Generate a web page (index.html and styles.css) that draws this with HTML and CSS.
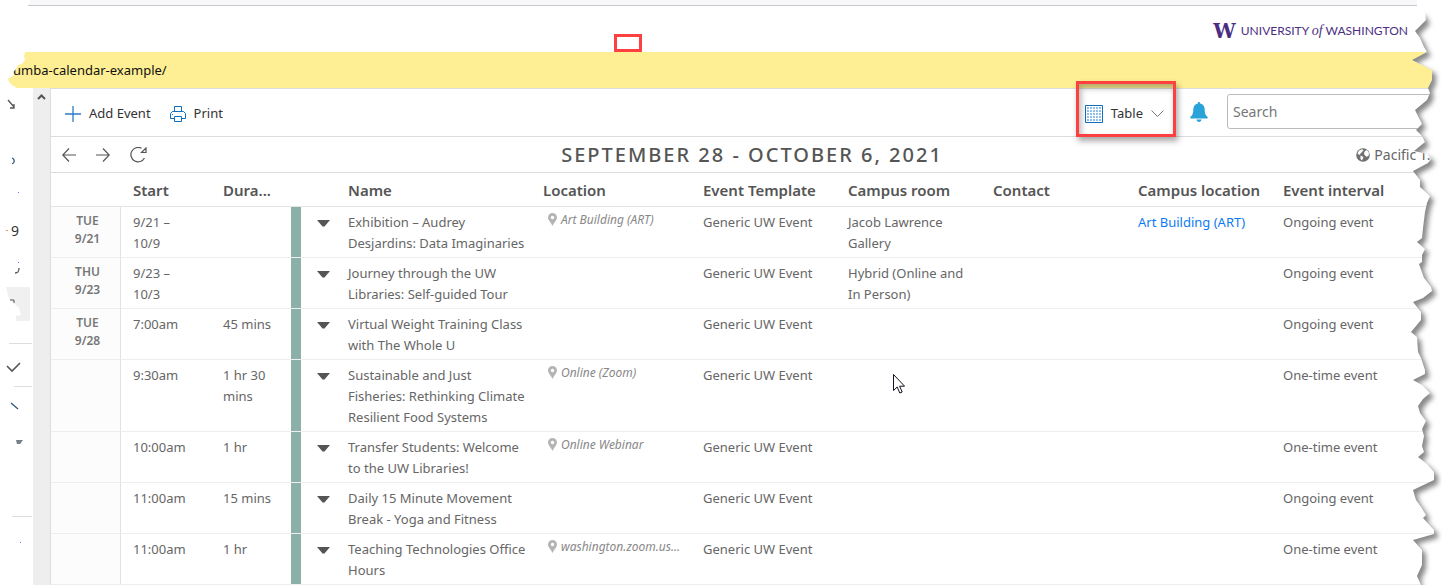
FILE: index.html
```html
<!DOCTYPE html>
<html lang="en">
<head>
<meta charset="utf-8">
<title>Calendar - Table view</title>
<link rel="stylesheet" href="styles.css">
</head>
<body>
<div class="page">
  <div class="top-strip"></div>
  <header class="brand-bar">
    <span class="marker"></span>
    <a class="brand" href="#"><span class="brand-w">W</span><span class="brand-name">UNIVERSITY <i>of</i> WASHINGTON</span></a>
  </header>
  <div class="address">umba-calendar-example/</div>
  <div class="workspace">
    <aside class="side">
      <svg width="33" height="496" viewBox="0 88 33 496" aria-hidden="true">
        <g fill="none" stroke="#555" stroke-width="1.3">
          <path d="M8 100l6 7M10 108h4v-4"/>
          <path d="M12 158c3 1 3 5 0 6" stroke="#357"/>
          <path d="M19 268c0 4-1 5-4 5"/>
          <path d="M7 366l5 5 8-8" stroke-width="1.6"/>
          <path d="M11 403l7 6" stroke="#357"/>
        </g>
        <text class="side-num" x="11" y="236">9</text>
        <path d="M6 287h24v34H16v-5l5-1-2-7-10-9z" fill="#f0f0f0"/>
        <path d="M10 300h4v3" fill="none" stroke="#555"/>
        <path d="M9 343.500h23M14 386.500h18M12 516.500h20" stroke="#ddd"/>
        <path d="M16 440h7l-3 4h-3z" fill="#777f88"/>
        <path d="M18 192h1v1h-1zM18 262h1v1h-1zM20 542h1v1h-1z" fill="#48e"/>
        <path d="M6 230h2v1H6z" fill="#e94"/>
      </svg>
    </aside>
    <div class="scroll-track">
      <svg width="9" height="6" viewBox="0 0 9 6" aria-hidden="true"><path d="M1 5l3.500-3.500L8 5" fill="none" stroke="#555" stroke-width="2"/></svg>
    </div>
    <main class="calendar">
      <div class="toolbar">
        <button class="tool" type="button">
          <svg width="16" height="16" viewBox="0 0 16 16" aria-hidden="true"><path d="M8 0v16M0 8h16" stroke="#2b7cc4" stroke-width="1.300"/></svg>
          Add Event
        </button>
        <button class="tool" type="button">
          <svg width="16" height="16" viewBox="0 0 16 16" aria-hidden="true"><g fill="none" stroke="#1070c0"><path d="M4.500 5.500v-5h7v5"/><path d="M4.500 12.500h-4v-5l2-2h11l2 2v5h-4"/><path d="M4.500 10.500h7v5h-7z"/></g><path d="M2 8h1v1H2z" fill="#1070c0"/></svg>
          Print
        </button>
        <div class="toolbar-end">
          <button class="tool view-picker" type="button">
            <svg width="18" height="18" viewBox="0 0 18 18" aria-hidden="true"><path d="M.500.500h17v17H.500z" fill="#fff" stroke="#1070c0"/><path d="M2 3h14M2 6h14M2 9h14M2 12h14M2 15h14" stroke="#8ec0ea" stroke-width="2" stroke-dasharray="2 1"/></svg>
            Table
            <svg width="13" height="7" viewBox="0 0 13 7" aria-hidden="true"><path d="M.500.500l6 6 6-6" fill="none" stroke="#777"/></svg>
          </button>
          <button class="bell" type="button" aria-label="Notifications">
            <svg width="18" height="20" viewBox="0 0 18 20" aria-hidden="true"><path d="M9 0c.8 0 1.200.6 1.200 1.500C13 2.200 14.700 4.400 14.700 7.200c0 4.300 1 5.800 2.500 7.300 1.200 1.200.6 2-.7 2H1.500c-1.300 0-1.900-.8-.7-2 1.500-1.500 2.500-3 2.500-7.300 0-2.800 1.700-5 4.500-5.700C7.800.6 8.200 0 9 0zM6.500 17.500h5c0 3.200-5 3.200-5 0z" fill="#2aa3d9"/></svg>
          </button>
          <input class="search" type="search" placeholder="Search" aria-label="Search">
        </div>
      </div>
      <div class="range-bar">
        <div class="range-nav">
          <button type="button" aria-label="Previous"><svg width="14" height="14" viewBox="0 0 14 14"><path d="M14 7H.800M7 .500L.800 7 7 13.500"/></svg></button>
          <button type="button" aria-label="Next"><svg width="14" height="14" viewBox="0 0 14 14"><path d="M0 7h13.200M7 .500L13.200 7 7 13.500"/></svg></button>
          <button type="button" aria-label="Refresh"><svg width="17" height="16" viewBox="0 0 17 16"><path d="M11.500 1.300A7.200 7.200 0 1 0 14.500 11M11.500 5.500h4.500V1z"/></svg></button>
        </div>
        <h1>SEPTEMBER 28 - OCTOBER 6, 2021</h1>
        <button class="zone" type="button">
          <svg width="14" height="14" viewBox="0 0 14 14" aria-hidden="true"><circle cx="7" cy="7" r="6.800" fill="#707070"/><path d="M3 2.500l3-1.300 1.500 1L6 4 4.500 5.500 3.500 7 1.500 5.500zM9 3l2-1 2 3-.5 3-2 .8L8.500 7 8 5zM4.500 7.500L7.500 9 6 12.500 4.500 11z" fill="#fff"/></svg>
          Pacific T...
        </button>
      </div>
      <table class="events">
        <colgroup>
          <col class="c-day"><col class="c-start"><col class="c-dura"><col class="c-bar"><col class="c-caret"><col class="c-name"><col class="c-loc"><col class="c-std"><col class="c-std"><col class="c-std"><col class="c-std"><col>
        </colgroup>
        <thead>
          <tr><th></th><th>Start</th><th>Dura...</th><th></th><th></th><th>Name</th><th>Location</th><th>Event Template</th><th>Campus room</th><th>Contact</th><th>Campus location</th><th>Event interval</th></tr>
        </thead>
        <tbody id="rows"></tbody>
      </table>
    </main>
  </div>
  <svg class="pointer" width="12" height="20" viewBox="0 0 12 20" aria-hidden="true"><path d="M.500.500v16l3.700-3.500 2.600 6 2.400-1-2.600-5.800h5z" fill="#fff" stroke="#112"/></svg>
  <svg class="tear-left" width="30" height="90" viewBox="0 0 30 90" aria-hidden="true"><path d="M0 0h30l-2 6H25V52l-1 4 1 4-3 4-4 1-2 4-3 3 1 3-6 4 1 3 3 3 5 3 5 2H0z" fill="#fff"/></svg>
  <svg class="tear-right" width="42" height="585" viewBox="1400 0 42 585" aria-hidden="true">
    <defs>
      <clipPath id="outside"><path d="M1442 0H1417L1417 8 1425 13 1426 20 1415 31 1420 38 1424 47 1427 52 1412 60 1424 66 1432 70 1432 80 1428 88 1430 93 1427 100 1415 110 1420 120 1422 124 1416 130 1422 136 1425 142 1414 151 1427 154 1431 159 1428 163 1413 171 1420 180 1420 187 1430 196 1427 203 1425 212 1423 228 1422 238 1417 242 1425 249 1422 255 1422 262 1419 264 1424 278 1431 287 1432 291 1423 298 1413 302 1421 312 1421 320 1411 332 1417 337 1418 352 1421 358 1425 370 1425 374 1413 380 1422 385 1430 393 1423 399 1418 406 1420 413 1426 421 1422 429 1424 436 1422 446 1424 452 1418 457 1427 464 1434 472 1434 480 1413 490 1416 500 1421 507 1426 515 1423 518 1434 530 1434 534 1413 540 1422 550 1422 565 1417 576 1421 585H1442z"/></clipPath>
      <filter id="soft" x="-50%" y="-10%" width="200%" height="120%"><feGaussianBlur stdDeviation="2.500"/></filter>
    </defs>
    <g clip-path="url(#outside)">
      <path d="M1400 0h42v585h-42z" fill="#fff"/>
      <path class="tear-shadow" filter="url(#soft)" transform="translate(4 4)" d="M1390 12H1422L1426 20 1415 31 1420 38 1424 47 1427 52 1412 60 1424 66 1432 70 1432 80 1428 88 1430 93 1427 100 1415 110 1420 120 1422 124 1416 130 1422 136 1425 142 1414 151 1427 154 1431 159 1428 163 1413 171 1420 180 1420 187 1430 196 1427 203 1425 212 1423 228 1422 238 1417 242 1425 249 1422 255 1422 262 1419 264 1424 278 1431 287 1432 291 1423 298 1413 302 1421 312 1421 320 1411 332 1417 337 1418 352 1421 358 1425 370 1425 374 1413 380 1422 385 1430 393 1423 399 1418 406 1420 413 1426 421 1422 429 1424 436 1422 446 1424 452 1418 457 1427 464 1434 472 1434 480 1413 490 1416 500 1421 507 1426 515 1423 518 1434 530 1434 534 1413 540 1422 550 1422 565 1417 576 1421 595H1390z"/>
    </g>
  </svg>
</div>
<script src="script.js"></script>
</body>
</html>
```
FILE: styles.css
```css
* { box-sizing: border-box; }
body {
  margin: 0;
  background: #fff;
  color: #666;
  font: 13px/21px "Noto Sans", "Open Sans", sans-serif;
  overflow: hidden;
}
button {
  display: block;
  padding: 0;
  border: 0;
  background: none;
  color: inherit;
  font: inherit;
}
svg { display: block; flex: none; }
.page { position: relative; overflow: hidden; }
.top-strip {
  height: 6px;
  background: #f8f8fb;
  border-bottom: 1px solid #c8c8cc;
}
.brand-bar {
  position: relative;
  display: flex;
  justify-content: flex-end;
  align-items: center;
  height: 46px;
  padding: 4px 34px 0 0;
}
.marker {
  position: absolute;
  left: 614px;
  bottom: 0;
  width: 28px;
  height: 18px;
  border: 3px solid #ff4040;
}
.brand {
  display: flex;
  align-items: center;
  gap: 5px;
  color: #4b2e83;
  text-decoration: none;
}
.brand-w { font: bold 20px/20px "DejaVu Serif", serif; }
.brand-name { font: 12px/20px Lato, sans-serif; }
.brand-name i { font: italic 14px/20px "Liberation Serif", serif; }
.address {
  height: 36px;
  padding-left: 13px;
  background: #feee94;
  color: #111;
  line-height: 36px;
}
.workspace { display: flex; }
.side { flex: 0 0 33px; }
.side-num { font: 14px "Noto Sans", sans-serif; fill: #333; }
.scroll-track {
  flex: 0 0 18px;
  padding: 6px 4px;
  background: #eee;
  border-right: 1px solid #ddd;
}
.calendar { flex: 1; min-width: 0; border-top: 1px solid #ddd; }
.toolbar {
  display: flex;
  align-items: center;
  gap: 19px;
  height: 48px;
  padding: 2px 0 0 14px;
  border-bottom: 1px solid #ddd;
  color: #333;
}
.tool { display: flex; align-items: center; gap: 8px; }
.toolbar-end { display: flex; align-items: center; margin-left: auto; }
.view-picker { position: relative; }
.view-picker::after {
  content: "";
  position: absolute;
  inset: -22px -12px -13px -9px;
  border: 3px solid #ff4040;
  box-shadow: 2px 4px 6px rgba(0, 0, 0, .35), inset 2px 4px 6px rgba(0, 0, 0, .3);
}
.bell { margin: 0 19px 4px 26px; }
.search {
  width: 215px;
  height: 35px;
  margin-bottom: 4px;
  padding: 0 5px;
  border: 1px solid #bbb;
  border-radius: 3px;
  background: #fff;
  font: inherit;
  font-size: 14px;
}
.search::placeholder { color: #777; opacity: 1; }
.range-bar {
  display: flex;
  align-items: center;
  height: 36px;
  border-bottom: 1px solid #ddd;
}
.range-nav { display: flex; flex: 1; align-items: center; gap: 20px; padding-left: 11px; }
.range-nav svg { fill: none; stroke: #555; stroke-width: 1.2; }
.range-bar h1 {
  margin: 0 0 0 4px;
  color: #555;
  font-size: 20px;
  font-weight: 500;
  letter-spacing: 2px;
}
.zone { display: flex; flex: 1; justify-content: flex-end; align-items: center; gap: 4px; padding-right: 4px; font-size: 14px; }
.events { width: 100%; table-layout: fixed; border-collapse: separate; border-spacing: 0; }
.c-day { width: 70px; }
.c-start { width: 90px; }
.c-dura { width: 80px; }
.c-bar { width: 10px; }
.c-caret { width: 35px; }
.c-name { width: 195px; }
.c-loc { width: 160px; }
.c-std { width: 145px; }
th {
  height: 34px;
  padding: 2px 0 0 12px;
  border-bottom: 1px solid #e4e4e4;
  color: #555;
  font-size: 15px;
  font-weight: 600;
  text-align: left;
  white-space: nowrap;
}
td {
  padding: 5px 6px 3px 12px;
  border-bottom: 1px solid #eee;
  vertical-align: top;
}
td.day {
  padding: 5px 0 0 4px;
  border-right: 1px solid #e2e2e2;
  background: #fcfcfc;
  color: #777;
  font-size: 12px;
  font-weight: 600;
  line-height: 18px;
  text-align: center;
}
td.bar { padding: 0; background: #8ab0a8; background-clip: padding-box; }
td.start { padding-right: 24px; }
td.caret { padding: 13px 0 0 16px; }
td.name { padding-right: 0; }
td.place { padding: 2px 12px 0 17px; color: #888; font-size: 12px; font-style: italic; }
.place-in { display: flex; align-items: center; gap: 4px; white-space: nowrap; }
td a { color: #0b7bf5; text-decoration: none; }
.pointer { position: absolute; left: 893px; top: 374px; }
.tear-left { position: absolute; left: 0; top: 0; }
.tear-right { position: absolute; right: 0; top: 0; }
.tear-shadow { fill: #888; }
```
FILE: script.js
```js
const events = [
  ["TUE<br>9/21", "9/21 –<br>10/9", "", "Exhibition – Audrey Desjardins: Data Imaginaries", "Art Building (ART)", "Jacob Lawrence Gallery", "Art Building (ART)", "Ongoing event"],
  ["THU<br>9/23", "9/23 –<br>10/3", "", "Journey through the UW Libraries: Self-guided Tour", "", "Hybrid (Online and In Person)", "", "Ongoing event"],
  ["TUE<br>9/28", "7:00am", "45 mins", "Virtual Weight Training Class with The Whole U", "", "", "", "Ongoing event"],
  ["", "9:30am", "1 hr 30 mins", "Sustainable and Just Fisheries: Rethinking Climate Resilient Food Systems", "Online (Zoom)", "", "", "One-time event"],
  ["", "10:00am", "1 hr", "Transfer Students: Welcome to the UW Libraries!", "Online Webinar", "", "", "One-time event"],
  ["", "11:00am", "15 mins", "Daily 15 Minute Movement Break - Yoga and Fitness", "", "", "", "Ongoing event"],
  ["", "11:00am", "1 hr", "Teaching Technologies Office Hours", "washington.zoom.us...", "", "", "One-time event"]
];
const pin = '<svg width="9" height="13" viewBox="0 0 9 13" aria-hidden="true"><path fill-rule="evenodd" d="M4.500 0A4.500 4.500 0 0 1 9 4.500C9 7.500 6 9.500 4.500 13 3 9.500 0 7.500 0 4.500A4.500 4.500 0 0 1 4.500 0zM4.500 2.800a1.700 1.700 0 1 0 0 3.400 1.700 1.700 0 0 0 0-3.400z" fill="#b4b4b4"/></svg>';
const caret = '<svg width="13" height="7" viewBox="0 0 13 7" aria-hidden="true"><path d="M0 0h13L7.500 6.500h-2z" fill="#555"/></svg>';
document.getElementById("rows").innerHTML = events.map(([day, start, dura, name, place, room, loc, interval]) => `
  <tr>
    <td class="day">${day}</td><td class="start">${start}</td><td>${dura}</td><td class="bar"></td>
    <td class="caret"><button type="button" aria-label="Event actions">${caret}</button></td>
    <td class="name">${name}</td>
    <td class="place">${place && `<div class="place-in">${pin}<span>${place}</span></div>`}</td>
    <td>Generic UW Event</td><td>${room}</td><td></td>
    <td>${loc && `<a href="#">${loc}</a>`}</td><td>${interval}</td>
  </tr>`).join("");
```
